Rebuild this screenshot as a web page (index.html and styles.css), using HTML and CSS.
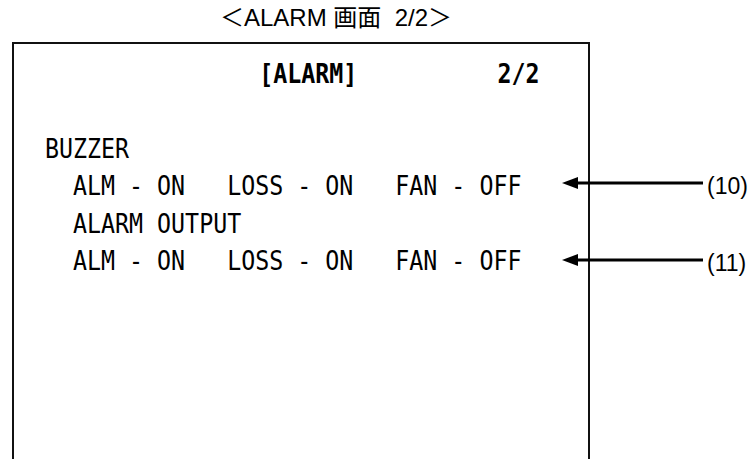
FILE: index.html
```html
<!DOCTYPE html>
<html lang="ja">
<head>
<meta charset="utf-8">
<title>ALARM 画面 2/2</title>
<link rel="stylesheet" href="styles.css">
</head>
<body>
<div class="page">
  <div class="caption">＜ALARM 画面  2/2＞</div>
  <div class="screen">
    <div class="line"><span class="text title">               [ALARM]          2/2</span></div>
    <div class="line"><span class="text"> </span></div>
    <div class="line"><span class="text">BUZZER</span></div>
    <div class="line">
      <span class="text">  ALM - ON   LOSS - ON   FAN - OFF</span>
      <span class="note note-a">
        <svg class="arrow" width="141" height="16" viewBox="0 0 141 16"><polygon points="0,8 16,2 16,14" fill="#000"/><line x1="14" y1="8" x2="141" y2="8" stroke="#000" stroke-width="3.2"/></svg>
        <span class="label">(10)</span>
      </span>
    </div>
    <div class="line"><span class="text">  ALARM OUTPUT</span></div>
    <div class="line">
      <span class="text">  ALM - ON   LOSS - ON   FAN - OFF</span>
      <span class="note note-b">
        <svg class="arrow" width="141" height="16" viewBox="0 0 141 16"><polygon points="0,8 16,2 16,14" fill="#000"/><line x1="14" y1="8" x2="141" y2="8" stroke="#000" stroke-width="3.2"/></svg>
        <span class="label">(11)</span>
      </span>
    </div>
  </div>
</div>
</body>
</html>
```

FILE: styles.css
```css
html, body {
  margin: 0;
  padding: 0;
  background: #fff;
  height: 459px;
  overflow: hidden;
}

.page {
  display: flex;
  flex-direction: column;
  color: #000;
}

.caption {
  height: 42px;
  padding-left: 220px;
  font-family: "Liberation Sans", "Noto Sans CJK JP", sans-serif;
  font-size: 24px;
  line-height: 36px;
  white-space: pre;
}

.screen {
  margin-left: 12px;
  width: 578px;
  height: 417px;
  border: 2px solid #111;
  border-bottom: none;
  padding: 11px 0 0 31px;
  box-sizing: border-box;
  display: flex;
  flex-direction: column;
}

.line {
  display: grid;
  grid-template-columns: 517px auto;
  align-items: center;
  height: 37.4px;
}

.text {
  display: inline-block;
  font-family: "DejaVu Sans Mono", "Liberation Mono", monospace;
  font-size: 27px;
  line-height: 37.4px;
  white-space: pre;
  transform: scaleX(0.862);
  transform-origin: 0 50%;
}

.title {
  font-weight: bold;
  margin-left: 4px;
}

.note {
  display: flex;
  align-items: center;
  width: 200px;
  gap: 4px;
}

.note-a {
  margin-top: -6px;
}

.note-b {
  margin-top: -2px;
}

.arrow {
  display: block;
  flex-shrink: 0;
}

.label {
  font-family: "Liberation Sans", sans-serif;
  font-size: 23px;
  line-height: 24px;
  margin-top: 6px;
}
```
